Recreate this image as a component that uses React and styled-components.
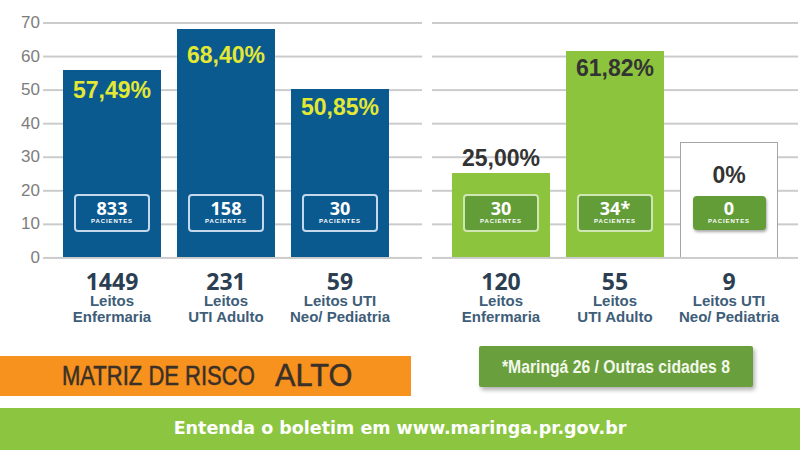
import React from 'react';
import styled, { createGlobalStyle } from 'styled-components';

const GlobalStyle = createGlobalStyle`
  html, body {
    margin: 0;
    padding: 0;
    background: #ffffff;
  }
  body {
    font-family: "Liberation Sans", Arial, sans-serif;
  }
`;

const Page = styled.div`
  width: 800px;
  height: 450px;
  overflow: hidden;
  background: #ffffff;
  display: flex;
  flex-direction: column;
`;

const ChartRow = styled.div`
  display: flex;
  align-items: flex-start;
  height: 259px;
`;

const Axis = styled.div`
  width: 43px;
  box-sizing: border-box;
  padding: 13px 3px 0 0;
  display: flex;
  flex-direction: column;
  gap: 13.57px;
`;

const Tick = styled.div`
  height: 20px;
  line-height: 20px;
  text-align: right;
  font-size: 17px;
  color: #7d7d7d;
`;

const Plot = styled.div`
  width: ${({ $w }) => $w}px;
  margin-top: 22px;
  margin-right: ${({ $mr }) => $mr || 0}px;
  height: 237px;
  box-sizing: border-box;
  padding: 0 0 2px 20px;
  display: flex;
  align-items: flex-end;
  gap: 16px;
  background-image: linear-gradient(#cbcbcb 2px, transparent 2px);
  background-size: 100% 33.57px;
`;

const Slot = styled.div`
  width: 98px;
  display: flex;
  flex-direction: column;
  justify-content: flex-end;
  align-items: center;
`;

const Bar = styled.div`
  width: 98px;
  height: ${({ $h }) => $h}px;
  box-sizing: border-box;
  display: flex;
  flex-direction: column;
  align-items: center;
  padding-top: ${({ $pt }) => $pt || 0}px;
  background: ${({ $kind }) =>
    $kind === 'blue' ? '#0b5a8f' : $kind === 'green' ? '#8cc43d' : '#ffffff'};
  border: ${({ $kind }) => ($kind === 'empty' ? '1.5px solid #a5a5a5' : 'none')};
  border-bottom: none;
`;

const Pct = styled.div`
  font-size: 23px;
  line-height: 26px;
  font-weight: bold;
  color: ${({ $color }) => $color};
  white-space: nowrap;
`;

const OutsidePct = styled(Pct)`
  margin-bottom: 2px;
`;

const Count = styled.div`
  margin-top: auto;
  margin-bottom: ${({ $flat }) => ($flat ? 27 : 25)}px;
  width: ${({ $flat }) => ($flat ? 73 : 76)}px;
  height: ${({ $flat }) => ($flat ? 34 : 38)}px;
  box-sizing: border-box;
  border-radius: 4px;
  border: ${({ $flat, $kind }) =>
    $flat ? 'none' : `2px solid ${$kind === 'blue' ? '#c3d8ea' : '#cfe6b2'}`};
  background: ${({ $kind }) => ($kind === 'blue' ? '#0b5a8f' : '#639d38')};
  box-shadow: ${({ $flat }) => ($flat ? '1px 2px 3px rgba(0,0,0,0.35)' : 'none')};
  display: flex;
  flex-direction: column;
  align-items: center;
  justify-content: center;
  padding-bottom: 1px;
  color: #ffffff;
`;

const CountNum = styled.div`
  font-family: "Open Sans", "Liberation Sans", sans-serif;
  font-weight: bold;
  font-size: 18px;
  line-height: 17px;
`;

const CountLabel = styled.div`
  font-size: 6px;
  line-height: 8px;
  font-weight: bold;
  letter-spacing: 0.9px;
`;

const LabelRow = styled.div`
  display: flex;
  padding-left: 43px;
  gap: 10px;
  height: 87px;
`;

const LabelGroup = styled.div`
  width: ${({ $w }) => $w}px;
  box-sizing: border-box;
  padding: 10px 0 0 20px;
  display: flex;
  gap: 16px;
`;

const LabelCol = styled.div`
  width: 98px;
  display: flex;
  flex-direction: column;
  align-items: center;
  white-space: nowrap;
`;

const Total = styled.div`
  font-family: "Open Sans", "Liberation Sans", sans-serif;
  font-size: 23px;
  line-height: 24px;
  font-weight: bold;
  color: #2b3e52;
`;

const Caption = styled.div`
  font-size: 15px;
  line-height: 16px;
  font-weight: bold;
  color: #3e5d79;
  text-align: center;
`;

const InfoRow = styled.div`
  display: flex;
  align-items: flex-start;
  height: 62px;
`;

const RiskBanner = styled.div`
  margin-top: 10px;
  width: 411px;
  height: 40px;
  background: #f7921f;
  display: flex;
  align-items: center;
  padding-left: 62px;
  box-sizing: border-box;
  color: #3a3027;
  white-space: nowrap;
  -webkit-text-stroke: 0.5px #3a3027;
`;

/* the banner face is a condensed one: squeeze the text, keep the layout box */
const Squeezed = styled.span`
  display: inline-block;
  width: ${({ $w }) => $w}px;
  margin-left: ${({ $ml }) => $ml || 0}px;
  font-size: ${({ $size }) => $size}px;
  line-height: 40px;
  transform: scaleX(${({ $sx }) => $sx});
  transform-origin: left center;
`;

const Note = styled.div`
  margin-left: 68px;
  width: 274px;
  height: 41px;
  background: #6a9f3d;
  border-radius: 2px;
  box-shadow: 2px 3px 4px rgba(0, 0, 0, 0.3);
  display: flex;
  align-items: center;
  padding: 0 0 0 23px;
  box-sizing: border-box;
  color: #f2f8ea;
  font-weight: bold;
  white-space: nowrap;
`;

const Footer = styled.div`
  flex: 1;
  background: #8cc641;
  display: flex;
  align-items: center;
  justify-content: center;
  color: #ffffff;
  font-family: "DejaVu Sans", sans-serif;
  font-weight: bold;
  font-size: 17.5px;
  padding-bottom: 2px;
`;

const leftBars = [
  { pct: '57,49%', h: 187, pt: 7, count: '833', total: '1449', label: ['Leitos', 'Enfermaria'] },
  { pct: '68,40%', h: 228, pt: 13, count: '158', total: '231', label: ['Leitos', 'UTI Adulto'] },
  { pct: '50,85%', h: 168, pt: 5, count: '30', total: '59', label: ['Leitos UTI', 'Neo/ Pediatria'] },
];

const rightBars = [
  { pct: '25,00%', h: 84, outside: true, kind: 'green', count: '30', total: '120', label: ['Leitos', 'Enfermaria'] },
  { pct: '61,82%', h: 206, pt: 4, kind: 'green', count: '34*', total: '55', label: ['Leitos', 'UTI Adulto'] },
  { pct: '0%', h: 115, pt: 19, kind: 'empty', count: '0', total: '9', label: ['Leitos UTI', 'Neo/ Pediatria'] },
];

const ticks = ['70', '60', '50', '40', '30', '20', '10', '0'];

const BarItem = ({ item, kind }) => {
  const pctColor = kind === 'blue' ? '#e3e834' : '#333333';
  const flat = kind === 'empty';
  return (
    <Slot>
      {item.outside && <OutsidePct $color={pctColor}>{item.pct}</OutsidePct>}
      <Bar $h={item.h} $pt={item.pt} $kind={kind}>
        {!item.outside && <Pct $color={pctColor}>{item.pct}</Pct>}
        <Count $kind={kind} $flat={flat}>
          <CountNum>{item.count}</CountNum>
          <CountLabel>PACIENTES</CountLabel>
        </Count>
      </Bar>
    </Slot>
  );
};

const Labels = ({ items, width }) => (
  <LabelGroup $w={width}>
    {items.map((item) => (
      <LabelCol key={item.total}>
        <Total>{item.total}</Total>
        {item.label.map((line) => (
          <Caption key={line}>{line}</Caption>
        ))}
      </LabelCol>
    ))}
  </LabelGroup>
);

const App = () => (
  <Page>
    <GlobalStyle />
    <ChartRow>
      <Axis>
        {ticks.map((t) => (
          <Tick key={t}>{t}</Tick>
        ))}
      </Axis>
      <Plot $w={379} $mr={10}>
        {leftBars.map((item) => (
          <BarItem key={item.pct} item={item} kind="blue" />
        ))}
      </Plot>
      <Plot $w={366}>
        {rightBars.map((item) => (
          <BarItem key={item.pct} item={item} kind={item.kind} />
        ))}
      </Plot>
    </ChartRow>

    <LabelRow>
      <Labels items={leftBars} width={379} />
      <Labels items={rightBars} width={366} />
    </LabelRow>

    <InfoRow>
      <RiskBanner>
        <Squeezed $w={193} $size={27} $sx={0.815}>MATRIZ DE RISCO</Squeezed>
        <Squeezed $w={77} $ml={20} $size={31} $sx={0.99}>ALTO</Squeezed>
      </RiskBanner>
      <Note>
        <Squeezed $w={228} $size={18} $sx={0.873}>*Maringá 26 / Outras cidades 8</Squeezed>
      </Note>
    </InfoRow>

    <Footer>Entenda o boletim em www.maringa.pr.gov.br</Footer>
  </Page>
);

export default App;
